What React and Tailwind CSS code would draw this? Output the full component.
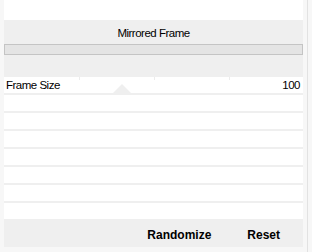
export default function App() {
  const rows = [0, 1, 2, 3, 4, 5, 6];

  return (
    <div
      className="flex h-[252px] w-[312px] bg-[#f7f7f7] text-black"
      style={{ fontFamily: '"Liberation Sans", Arial, sans-serif' }}
    >
      <div className="w-[4px] shrink-0" />

      <div className="flex w-[299px] shrink-0 flex-col">
        <div className="h-[20px] bg-white" />

        {/* header */}
        <div className="flex h-[57px] flex-col bg-[#efefef] pt-[7px]">
          <div className="flex h-[13px] items-center justify-center text-[11.5px] leading-[13px] tracking-[-0.5px]">
            Mirrored Frame
          </div>
          <div className="mt-[4px] h-[11px] border border-[#c4c4c4] bg-[#e4e4e4]" />
        </div>

        {/* slider row */}
        <div className="relative h-[16px] bg-white">
          <div className="absolute left-[75px] top-0 h-[3px] w-px bg-[#ececec]" />
          <div className="absolute left-[150px] top-0 h-[3px] w-px bg-[#ececec]" />
          <div className="absolute left-[225px] top-0 h-[3px] w-px bg-[#ececec]" />
          <div className="absolute bottom-0 left-[109px] h-0 w-0 border-x-[9px] border-b-[9px] border-x-transparent border-b-[#efefef]" />
          <div className="relative flex h-full items-center justify-between pl-[2px] pr-[3px] text-[11.5px] leading-[13px] tracking-[-0.5px]">
            <span>Frame Size</span>
            <span>100</span>
          </div>
        </div>

        {rows.map((row) => (
          <div key={row}>
            <div className="h-[2px] bg-[#efefef]" />
            <div className="h-[16px] bg-white" />
          </div>
        ))}

        {/* footer */}
        <div className="flex h-[28px] items-center justify-end gap-[36px] bg-[#efefef] pr-[23px] pt-[3px] text-[12px] font-bold">
          <button type="button">Randomize</button>
          <button type="button">Reset</button>
        </div>
      </div>

      <div className="w-[4px] shrink-0" />
      <div className="w-px shrink-0 bg-[#e2e2e2]" />
      <div className="flex-1" />
    </div>
  );
}
